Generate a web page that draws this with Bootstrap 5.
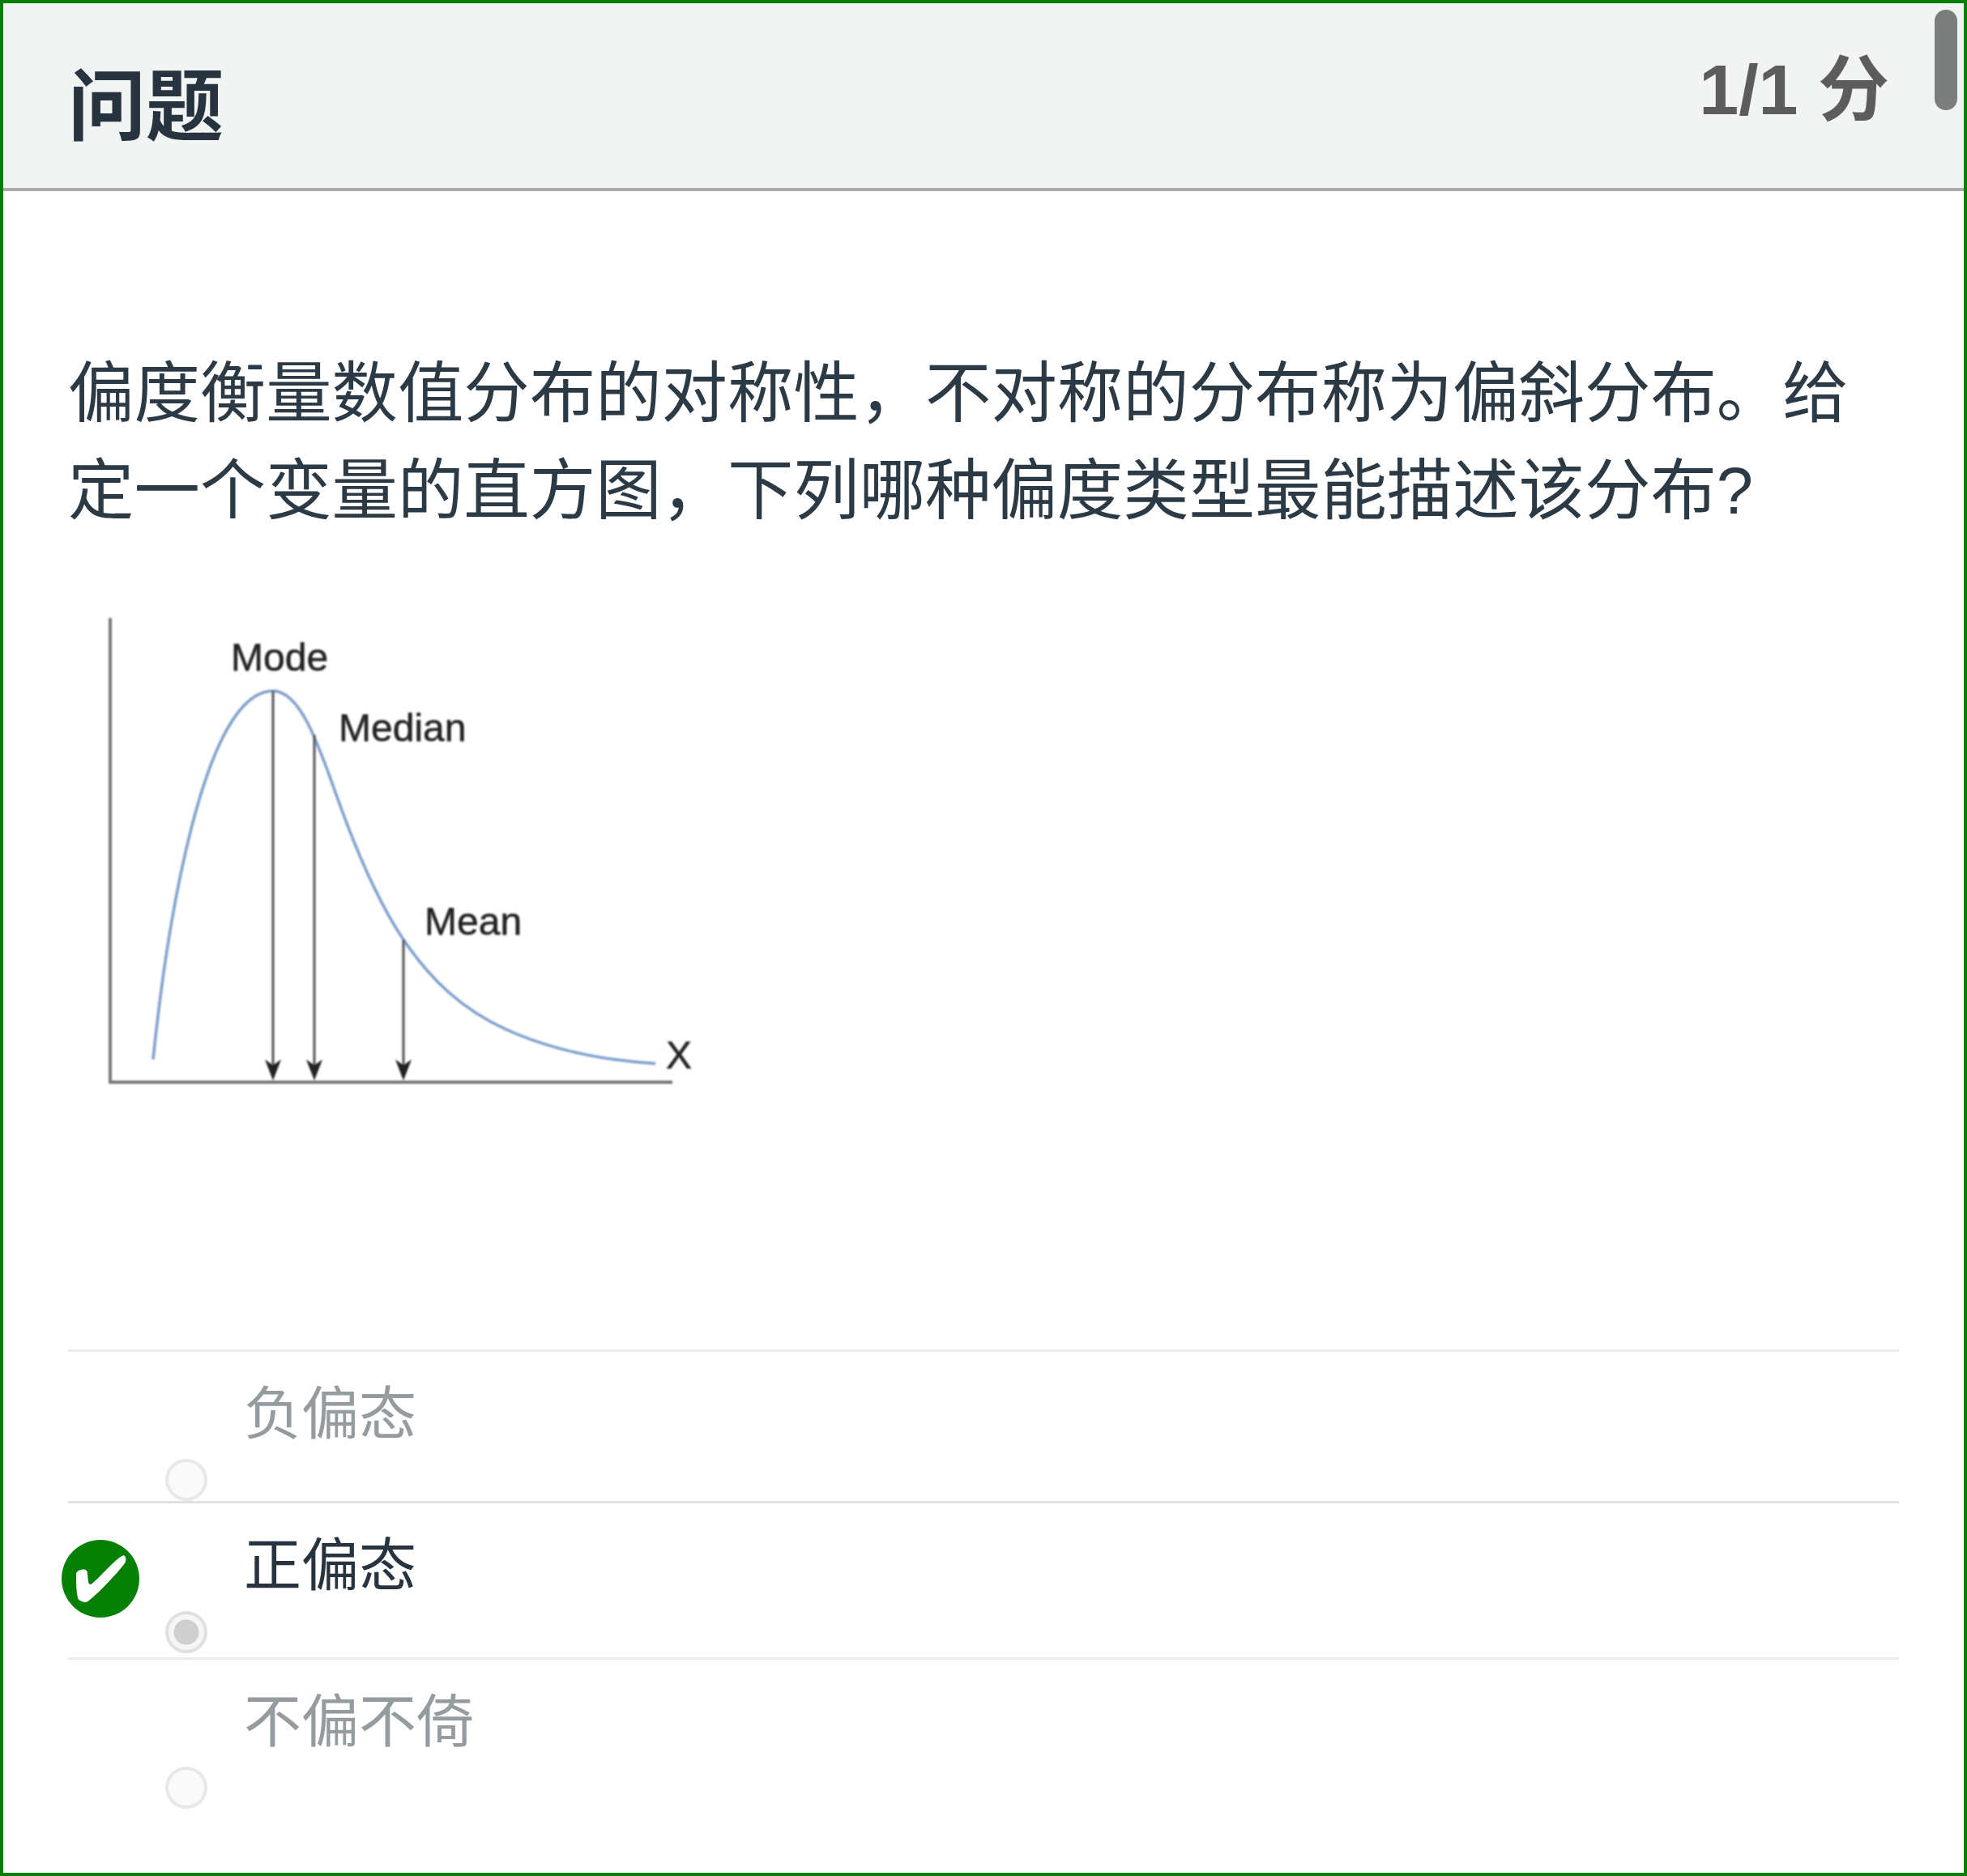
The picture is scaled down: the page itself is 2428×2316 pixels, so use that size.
<!DOCTYPE html>
<html lang="zh-CN">

<head>
    <meta charset="UTF-8">
    <meta name="viewport" content="width=device-width, initial-scale=1.0">
    <title>问题</title>
    <link href="https://cdn.jsdelivr.net/npm/bootstrap@5.3.0/dist/css/bootstrap.min.css" rel="stylesheet">
    <style>
        html, body { height: 100%; }
        body { font-family: "Liberation Sans", "Noto Sans CJK SC", sans-serif; color: #27343f; background: #fff; }
        .quiz-frame { height: 2316px; border: 4px solid #058005; overflow: hidden; }
        .quiz-head { height: 232px; background: #f2f4f3; border-bottom: 4px solid #aaa; padding: 0 92px 0 80px; }
        .quiz-title { font-size: 96px; font-weight: 700; line-height: 1; margin: 80px 0 0; color: #27343f; }
        .quiz-score { font-size: 88px; font-weight: 700; line-height: 1; margin: 63px 0 0; color: #5c5c5c; }
        .quiz-scroll { top: 8px; right: 8px; width: 28px; height: 124px; border-radius: 14px; background: #7b7d7c; }
        .quiz-body { padding: 190px 80px 0; }
        .quiz-text { font-size: 81.4px; line-height: 120px; margin: 0; color: #2c3a45; }
        .quiz-chart { display: block; margin-top: 75px; }
        .quiz-chart text { font-family: "Liberation Sans", sans-serif; font-size: 48px; fill: #222; stroke: #222; stroke-width: 0.5px; }
        .quiz-options { margin-top: 305px; }
        .opt-row { border-top: 3px solid #ececec; height: 187px; padding-left: 120px; }
        .opt-row.is-picked { height: 193px; border-top-color: #e0e0e0; padding-bottom: 5px; }
        .opt-row .form-check-input { width: 52px; height: 52px; margin: 0 45px 0 0; flex: none; opacity: 1; align-self: flex-end; background-color: #fafafa; border: 4px solid #e8e8e8; background-image: none; }
        .opt-row.is-picked .form-check-input { background-color: #f6f6f6; border-color: #e0e0e0; background-image: radial-gradient(circle, #cfcfcf 15px, transparent 16px); }
        .opt-label { font-size: 71px; line-height: 1; padding-top: 41px; color: #959ca0; }
        .is-picked .opt-label { color: #27343f; }
        .opt-tick { left: -8px; top: 45px; width: 96px; height: 96px; }
    </style>
</head>

<body>
    <div class="quiz-frame position-relative">
        <!-- Header -->
        <div class="quiz-head d-flex justify-content-between align-items-start">
            <h2 class="quiz-title">问题</h2>
            <div class="quiz-score">1/1 分</div>
        </div>
        <div class="quiz-scroll position-absolute"></div>

        <div class="quiz-body">
            <p class="quiz-text">偏度衡量数值分布的对称性，不对称的分布称为偏斜分布。给定一个变量的直方图，下列哪种偏度类型最能描述该分布?</p>

            <!-- Chart -->
            <svg class="quiz-chart" width="800" height="620" viewBox="84 740 800 620" xmlns="http://www.w3.org/2000/svg">
                <defs>
                    <filter id="soft" x="-5%" y="-5%" width="110%" height="110%"><feGaussianBlur stdDeviation="0.9"/></filter>
                </defs>
                <g filter="url(#soft)">
                    <path d="M136 762V1335H830" fill="none" stroke="#777" stroke-width="4"/>
                    <path d="M189 1307C205 1150 250 852 337 852C370 852 392 915 415 980C438 1045 465 1110 498 1159C531 1208 570 1245 625 1270C680 1295 745 1308 809 1312" fill="none" stroke="#7a9dcc" stroke-width="3.5"/>
                    <path d="M337 852V1315M388 906V1315M498 1159V1315" fill="none" stroke="#555" stroke-width="3"/>
                    <path d="M327 1307L337 1333L347 1307L337 1314ZM378 1307L388 1333L398 1307L388 1314ZM488 1307L498 1333L508 1307L498 1314Z" fill="#222"/>
                    <text x="285" y="827">Mode</text>
                    <text x="418" y="914">Median</text>
                    <text x="524" y="1153">Mean</text>
                    <text x="822" y="1318">X</text>
                </g>
            </svg>

            <!-- Answer options -->
            <div class="quiz-options">
                <div class="opt-row d-flex">
                    <input class="form-check-input" type="radio" name="skew" disabled>
                    <div class="opt-label">负偏态</div>
                </div>
                <div class="opt-row is-picked d-flex position-relative">
                    <svg class="opt-tick position-absolute" viewBox="-48 -48 96 96" xmlns="http://www.w3.org/2000/svg">
                        <circle r="48" fill="#058005"/>
                        <path d="M-30 -6C-30 -11 -18 -14 -16.5 -9C-15 -2 -16 7 -12.6 7C-8 7 17 -24 27.5 -28.5C31 -30 32 -24 31 -21C28 -14 -8 24 -16.5 28.5C-20 30 -27 27 -28 24C-30 15 -30 5 -30 -6Z" fill="#fff"/>
                    </svg>
                    <input class="form-check-input" type="radio" name="skew" checked disabled>
                    <div class="opt-label">正偏态</div>
                </div>
                <div class="opt-row d-flex">
                    <input class="form-check-input" type="radio" name="skew" disabled>
                    <div class="opt-label">不偏不倚</div>
                </div>
            </div>
        </div>
    </div>

    <script src="https://cdn.jsdelivr.net/npm/bootstrap@5.3.0/dist/js/bootstrap.bundle.min.js"></script>
</body>

</html>
